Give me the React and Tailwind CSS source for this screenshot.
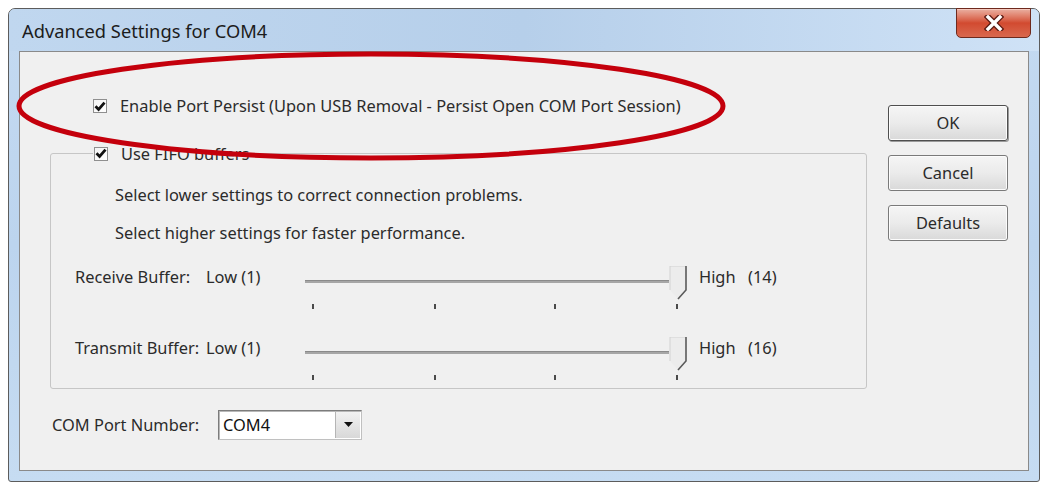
import React from "react";

const FONT = { fontFamily: '"Noto Sans", "Open Sans", "Liberation Sans", sans-serif' };

function Check() {
  return (
    <span className="inline-flex w-[14px] h-[14px] items-center justify-center border border-[#8f8f8f] bg-gradient-to-br from-[#f4f4f4] to-[#ffffff] shrink-0">
      <svg width="12" height="11" viewBox="0 0 12 11">
        <path d="M1.5 5.2 L4.6 8.4 L10.5 1.6" fill="none" stroke="#111" strokeWidth="2.8" strokeLinejoin="miter" />
      </svg>
    </span>
  );
}

function Slider() {
  const ticks = [8, 130, 250, 372];
  return (
    <svg width="382" height="44" viewBox="0 0 382 44" className="shrink-0">
      <rect x="0" y="14" width="364" height="3" fill="#a6a6a6" />
      <rect x="0" y="14" width="364" height="1" fill="#8a8a8a" />
      <polygon points="365,0 381,0 381,24 373,33 365,24" fill="#ececec" />
      <polyline points="365,24 365,0 381,0" fill="none" stroke="#d2d2d2" strokeWidth="1" />
      <polyline points="381,0 381,24 373,33" fill="none" stroke="#5a5a5a" strokeWidth="1.6" />
      {ticks.map((x) => (
        <rect key={x} x={x - 1} y="38" width="2" height="5" fill="#4a4a4a" />
      ))}
    </svg>
  );
}

function SliderRow({ label, high, className }) {
  return (
    <div className={"flex items-start pl-[24px] " + className}>
      <span className="w-[131px] leading-[22px]">{label}</span>
      <span className="w-[99px] leading-[22px]">Low (1)</span>
      <Slider />
      <span className="ml-[12px] w-[49px] leading-[22px]">High</span>
      <span className="leading-[22px]">{high}</span>
    </div>
  );
}

function Btn({ children, def }) {
  return (
    <div
      className={
        "h-[36px] flex items-center justify-center rounded-[3px] border bg-gradient-to-b from-[#f5f5f5] via-[#ebebeb] to-[#d9d9d9] " +
        (def ? "border-[#4f4f4f] shadow-[inset_0_0_0_1px_#fcfcfc,1px_1px_0_#9a9a9a]" : "border-[#7a7a7a] shadow-[inset_0_0_0_1px_#fcfcfc]")
      }
    >
      {children}
    </div>
  );
}

export default function App() {
  return (
    <div className="relative w-[1048px] h-[486px] bg-white pt-[8px] pl-[8px] pr-[8px] pb-[4px] text-[16.4px] text-[#2b2b2b]" style={FONT}>
      <div className="h-full flex flex-col rounded-t-[7px] rounded-b-[3px] border border-[#5c5c5c] bg-gradient-to-b from-[#c4daf1] via-[#bcd4ee] to-[#c6dcf2]">
        {/* title bar */}
        <div className="h-[42px] flex items-start justify-between pl-[13px] bg-gradient-to-r from-[#c0d7ef] via-[#b6cfea] to-[#cfe2f6] rounded-t-[6px]">
          <span className="pt-[10px] leading-[24px] text-[18.3px] text-[#1c1c1c]">Advanced Settings for COM4</span>
          <div className="-mt-[1px] mr-[8px] w-[75px] h-[30px] rounded-b-[5px] border border-[#6e2a1e] bg-gradient-to-b from-[#e9b0a2] via-[#d24a30] to-[#d9684e] flex items-center justify-center shadow-[inset_0_1px_0_#f5c8bd]">
            <svg width="20" height="16" viewBox="0 0 20 16">
              <path d="M4 2 L16 14 M16 2 L4 14" stroke="#5a1a12" strokeWidth="6" strokeLinecap="square" />
              <path d="M4 2 L16 14 M16 2 L4 14" stroke="#ffffff" strokeWidth="3.4" strokeLinecap="square" />
            </svg>
          </div>
        </div>
        {/* client area wrapper */}
        <div className="flex-1 flex px-[10px] pb-[10px]">
          <div className="flex-1 flex border border-[#8a8a8a] bg-[#f0f0f0]">
            <div className="flex-1 flex flex-col">
              <div className="flex items-center gap-[13px] pl-[73px] pt-[43px] leading-[22px]">
                <Check />
                <span>Enable Port Persist (Upon USB Removal - Persist Open COM Port Session)</span>
              </div>
              <fieldset className="mt-[24px] ml-[30px] w-[817px] border border-[#c6c6c6] rounded-[3px] pb-[7px]">
                <legend className="ml-[42px] pl-[1px] pr-[4px]">
                  <span className="inline-flex items-center gap-[13px] h-[22px] leading-[22px]">
                    <Check />
                    <span>Use FIFO buffers</span>
                  </span>
                </legend>
                <div className="pl-[64px] mt-[18px] leading-[22px]">Select lower settings to correct connection problems.</div>
                <div className="pl-[64px] mt-[16px] leading-[22px]">Select higher settings for faster performance.</div>
                <SliderRow className="mt-[22px]" label="Receive Buffer:" high="(14)" />
                <SliderRow className="mt-[27px]" label="Transmit Buffer:" high="(16)" />
              </fieldset>
              <div className="flex items-center pl-[32px] mt-[21px]">
                <span className="w-[166px] leading-[22px]">COM Port Number:</span>
                <div className="w-[144px] h-[30px] flex items-stretch border border-[#7c7c7c] border-r-[#c0c0c0] border-b-[#c0c0c0] bg-white p-[1px] shadow-[inset_1px_1px_0_#b8b8b8]">
                  <span className="flex-1 pl-[3px] leading-[26px] text-[#111]">COM4</span>
                  <div className="w-[25px] flex items-center justify-center border-l border-[#b5b5b5] bg-gradient-to-b from-[#f2f2f2] to-[#d8d8d8]">
                    <svg width="9" height="5" viewBox="0 0 9 5">
                      <path d="M0 0 L9 0 L4.5 5 Z" fill="#111" />
                    </svg>
                  </div>
                </div>
              </div>
            </div>
            <div className="w-[120px] mr-[20px] mt-[53px] flex flex-col gap-[14px]">
              <Btn def>OK</Btn>
              <Btn>Cancel</Btn>
              <Btn>Defaults</Btn>
            </div>
          </div>
        </div>
      </div>
      {/* annotation ellipse */}
      <svg className="absolute left-0 top-0 pointer-events-none" width="1048" height="486" viewBox="0 0 1048 486">
        <ellipse cx="371" cy="106" rx="352" ry="52" fill="none" stroke="#c4000c" strokeWidth="5" />
      </svg>
    </div>
  );
}
